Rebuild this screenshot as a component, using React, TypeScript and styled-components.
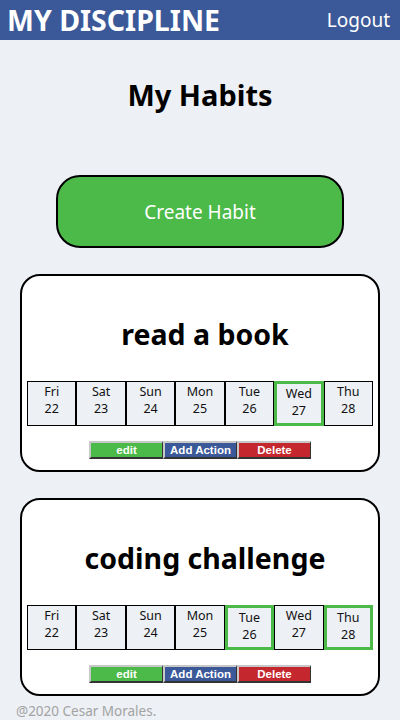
import React from "react"
import styled, { createGlobalStyle } from "styled-components"

const GlobalStyle = createGlobalStyle`
    body {
        margin: 0;
        background-color: #edf0f5;
        font-family: "Noto Sans", "Open Sans", sans-serif;
    }
`

const Header = styled.header`
    height: 40px;
    background-color: #3b5998;
    display: flex;
    align-items: center;
    justify-content: space-between;
    padding: 0 10px 0 7px;
    color: #fff;
`

const Brand = styled.div`
    font-weight: 700;
    font-size: 28.5px;
    line-height: 40px;
`

const Logout = styled.div`
    font-size: 19px;
    line-height: 40px;
`

const PageTitle = styled.h1`
    margin: 37px 0 0;
    text-align: center;
    font-size: 29px;
    line-height: 36px;
    font-weight: 700;
    color: #000;
`

const CreateButton = styled.button`
    display: block;
    margin: 62px auto 0;
    width: 288px;
    height: 73px;
    border: 2px solid #000;
    border-radius: 24px;
    background-color: #4cba48;
    color: #fff;
    font-family: "Noto Sans", sans-serif;
    font-size: 19px;
`

const HabitList = styled.div`
    margin: 26px 20px 0;
    display: flex;
    flex-direction: column;
    gap: 26px;
`

const Card = styled.div`
    background-color: #fff;
    border: 2px solid #000;
    border-radius: 20px;
    padding: 40px 5px 11px;
`

const HabitName = styled.h2`
    margin: 0;
    padding-left: 10px;
    text-align: center;
    font-size: 28.5px;
    line-height: 36px;
    font-weight: 700;
`

const Days = styled.div`
    margin-top: 29px;
    display: grid;
    grid-template-columns: repeat(7, minmax(0, 1fr));
`

const Day = styled.div<{ $done: boolean }>`
    height: 45px;
    box-sizing: border-box;
    background-color: #edf0f5;
    border: ${p => p.$done ? "3px solid #4cba48" : "1px solid #000"};
    padding-top: 1px;
    text-align: center;
    font-family: "Noto Sans", sans-serif;
    font-size: 12.5px;
    line-height: 17px;
    color: #111;
`

const Actions = styled.div`
    margin-top: 15px;
    display: flex;
    justify-content: center;
`

const ActionButton = styled.button<{ $bg: string }>`
    width: 74px;
    height: 18px;
    padding: 0;
    box-sizing: border-box;
    background-color: ${p => p.$bg};
    border-style: solid;
    border-width: 2px 1px 2px 2px;
    border-color: #c8c8c8 #333 #333 #c8c8c8;
    color: #fff;
    font-family: "Liberation Sans", Arial, sans-serif;
    font-weight: 700;
    font-size: 11.5px;
    line-height: 14px;
`

const Footer = styled.footer`
    margin-top: 7px;
    padding-left: 16px;
    font-size: 13.5px;
    line-height: 16px;
    color: #a3a3a3;
`

const days = [
    ["Fri", "22"], ["Sat", "23"], ["Sun", "24"], ["Mon", "25"],
    ["Tue", "26"], ["Wed", "27"], ["Thu", "28"],
]

const habits = [
    { name: "read a book", done: ["27"] },
    { name: "coding challenge", done: ["26", "28"] },
]

const App = () => {
    return (
        <>
            <GlobalStyle />
            <Header>
                <Brand>MY DISCIPLINE</Brand>
                <Logout>Logout</Logout>
            </Header>
            <PageTitle>My Habits</PageTitle>
            <CreateButton>Create Habit</CreateButton>
            <HabitList>
                {habits.map(h => (
                    <Card key={h.name}>
                        <HabitName>{h.name}</HabitName>
                        <Days>
                            {days.map(([d, n]) => (
                                <Day key={n} $done={h.done.includes(n)}>
                                    {d}<br />{n}
                                </Day>
                            ))}
                        </Days>
                        <Actions>
                            <ActionButton $bg="#4cba48">edit</ActionButton>
                            <ActionButton $bg="#3b5998">Add Action</ActionButton>
                            <ActionButton $bg="#c4272e">Delete</ActionButton>
                        </Actions>
                    </Card>
                ))}
            </HabitList>
            <Footer>@2020 Cesar Morales.</Footer>
        </>
    )
}

export default App
